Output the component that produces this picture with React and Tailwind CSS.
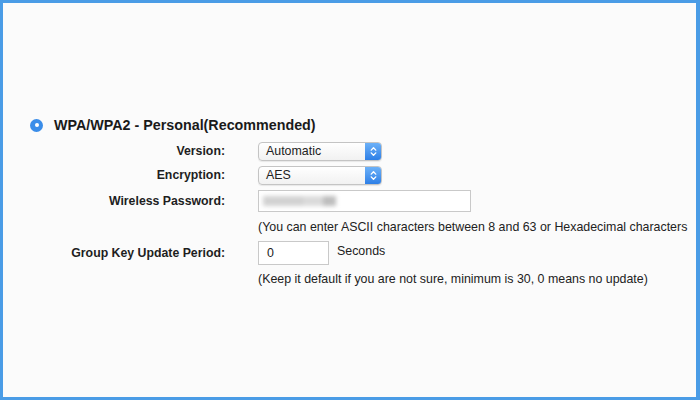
import { ChevronsUpDown } from "lucide-react";

const font = { fontFamily: '"Liberation Sans", Arial, sans-serif' };

function Select({ value }) {
  return (
    <div className="flex h-[19px] w-[124px] overflow-hidden rounded-[4px] border border-[#c4c4c4] bg-gradient-to-b from-white to-[#f1f1f1] shadow-[0_1px_1px_rgba(0,0,0,0.08)]">
      <span className="flex-1 pl-[7px] text-[12.4px] leading-[17px] text-[#222]">{value}</span>
      <span className="flex w-[16px] items-center justify-center bg-gradient-to-b from-[#6cb1f8] to-[#2d7fe6]">
        <ChevronsUpDown size={11} strokeWidth={3} className="text-white" />
      </span>
    </div>
  );
}

function Label({ children }) {
  return <div className="pr-[1px] text-right text-[12.3px] font-bold text-[#1e1e1e]">{children}</div>;
}

export default function App() {
  return (
    <div style={font} className="h-[400px] w-[700px] border-[3px] border-r-4 border-[#4a9ce6] bg-[#fbfbfb] text-[#222]">
      <div className="flex items-center gap-[11px] pl-[27px] pt-[113px]">
        <span className="flex h-[13px] w-[13px] items-center justify-center rounded-full bg-[#3a8de9]">
          <span className="h-[4px] w-[4px] rounded-full bg-white" />
        </span>
        <span className="text-[14.3px] font-bold leading-[18px] text-[#1a1a1a]">WPA/WPA2 - Personal(Recommended)</span>
      </div>

      <div className="mt-[8px] grid grid-cols-[223px_1fr] items-center gap-x-[32px]">
        <Label>Version:</Label>
        <Select value="Automatic" />

        <div className="col-span-2 h-[5px]" />
        <Label>Encryption:</Label>
        <Select value="AES" />

        <div className="col-span-2 h-[5px]" />
        <Label>Wireless Password:</Label>
        <div className="flex h-[22px] w-[213px] items-center border border-[#c9c9c9] bg-white pl-[4px]">
          <div className="flex h-[10px] w-[73px] blur-[2px]">
            <span className="w-[40px] bg-[#d2d2d2]" />
            <span className="w-[20px] bg-[#dadada]" />
            <span className="w-[13px] bg-[#bdbdbd]" />
          </div>
        </div>

        <div />
        <div className="mt-[6px] text-[12.4px] leading-[18px]">(You can enter ASCII characters between 8 and 63 or Hexadecimal characters</div>

        <div className="col-span-2 h-[5px]" />
        <Label>Group Key Update Period:</Label>
        <div className="flex items-center gap-[8px]">
          <div className="flex h-[24px] w-[71px] items-center border border-[#c9c9c9] bg-white pl-[8px] text-[12.4px]">0</div>
          <span className="-mt-[4px] text-[12.4px]">Seconds</span>
        </div>

        <div />
        <div className="mt-[5px] text-[12.4px] leading-[18px]">(Keep it default if you are not sure, minimum is 30, 0 means no update)</div>
      </div>
    </div>
  );
}
